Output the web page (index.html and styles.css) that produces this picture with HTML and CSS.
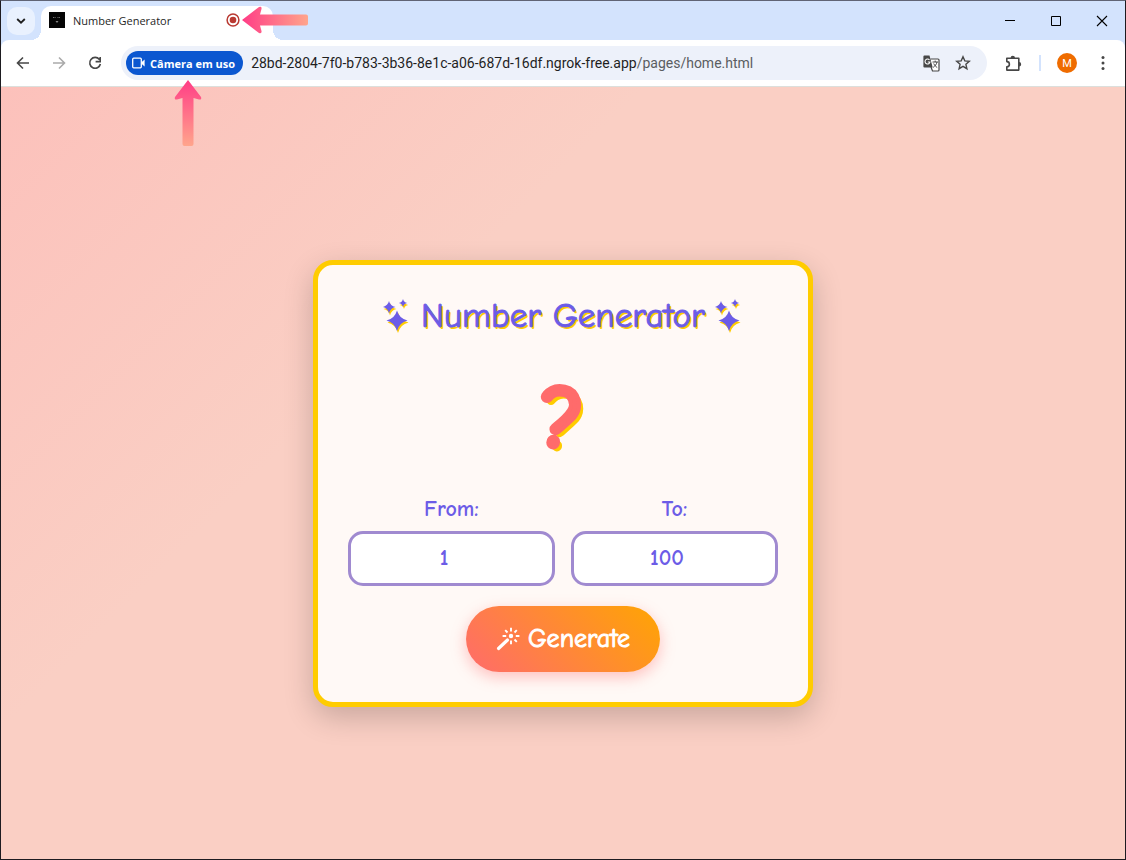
FILE: index.html
```html
<!DOCTYPE html>
<html lang="en">
<head>
<meta charset="utf-8">
<title>Number Generator</title>
<link rel="stylesheet" href="styles.css">
</head>
<body>
<div class="window">
  <header class="tabstrip">
    <button class="tab-search" aria-label="Search tabs"><svg width="10" height="6" viewBox="0 0 10 6"><path d="M1.2 1 5 4.7 8.8 1" fill="none" stroke="#1f1f1f" stroke-width="1.8"/></svg></button>
    <div class="tab">
      <svg class="favicon" width="16" height="16" viewBox="0 0 16 16"><path fill="#050505" d="M0 0h16v16H0z"/><path d="M4 5.500h3M8.500 5.500H11" stroke="#777" stroke-dasharray="1 .6"/><path d="M6.500 9h3L8 11z" fill="#888"/></svg>
      <span class="tab-title">Number Generator</span>
      <svg width="14" height="14" viewBox="0 0 14 14"><circle cx="7" cy="7" r="5.9" fill="none" stroke="#b93a32" stroke-width="1.5"/><circle cx="7" cy="7" r="3.3" fill="#b93a32"/></svg>
    </div>
    <div class="window-controls">
      <button aria-label="Minimize"><svg width="12" height="12" viewBox="0 0 12 12"><path d="M1 5.5h10" stroke="#000"/></svg></button>
      <button aria-label="Maximize"><svg width="12" height="12" viewBox="0 0 12 12"><path d="M1.5 1.5h9v9h-9z" fill="none" stroke="#000"/></svg></button>
      <button aria-label="Close"><svg width="12" height="12" viewBox="0 0 12 12"><path d="m1 1 10 10M11 1 1 11" stroke="#000" stroke-width="1.1"/></svg></button>
    </div>
  </header>

  <nav class="toolbar">
    <div class="nav-buttons">
      <button aria-label="Back"><svg width="14" height="14" viewBox="0 0 14 14"><path d="M13 7H2M7 1.5 1.5 7 7 12.5" fill="none" stroke="#474747" stroke-width="1.6"/></svg></button>
      <button aria-label="Forward"><svg width="14" height="14" viewBox="0 0 14 14"><path d="M1 7h11M7 1.5 12.5 7 7 12.5" fill="none" stroke="#aaa" stroke-width="1.6"/></svg></button>
      <button aria-label="Reload"><svg width="14" height="14" viewBox="0 0 14 14"><path d="M11.4 3.5A5.4 5.4 0 1 0 12.4 8M12.2 1v4.6H7.6" fill="none" stroke="#474747" stroke-width="1.6"/></svg></button>
    </div>
    <div class="omnibox">
      <button class="camera-chip"><svg width="13" height="12" viewBox="0 0 13 12"><rect x=".7" y="1.2" width="8.6" height="9.6" rx="1" fill="none" stroke="#fff" stroke-width="1.3"/><path d="M9.5 5.2 12.6 2.6v6.8L9.5 6.8z" fill="#fff"/></svg>Câmera em uso</button>
      <div class="url">28bd-2804-7f0-b783-3b36-8e1c-a06-687d-16df.ngrok-free.app<span class="url-path">/pages/home.html</span></div>
      <button class="omni-icon" aria-label="Translate"><svg width="17" height="17" viewBox="0 0 17 17"><path d="M7.5 4H15a1 1 0 0 1 1 1v10a1 1 0 0 1-1 1H9.5L8 12" fill="#fff" stroke="#474747" stroke-width="1.2"/><path d="M1.4.5h5.1l3.2 12H1.4a1 1 0 0 1-1-1v-10a1 1 0 0 1 1-1z" fill="#474747"/><path d="M6.5 5A2.5 2.5 0 1 0 7 7H4.8" fill="none" stroke="#fff" stroke-width="1.1"/><path d="M9.5 7H15M12.2 5.6V7M14 7c-.5 2.5-2 4-3.8 5.4M10.7 8.5c1 2 2 3 3.5 4" fill="none" stroke="#474747"/></svg></button>
      <button class="omni-icon" aria-label="Bookmark"><svg width="16" height="16" viewBox="0 0 16 16"><path d="m8 1.8 1.8 4.1 4.5.4-3.4 3 1 4.4L8 11.4l-3.9 2.3 1-4.4-3.4-3 4.5-.4z" fill="none" stroke="#474747" stroke-width="1.4"/></svg></button>
    </div>
    <button class="tool-icon" aria-label="Extensions"><svg width="17" height="17" viewBox="0 0 17 17"><path d="M1.8 3.2h12v11.900h-12v-3.300a2.300 2.300 0 0 0 0-5.200z" fill="none" stroke="#474747" stroke-width="1.6" stroke-linejoin="round"/><path d="M5.600 3a2.200 2.200 0 0 1 4.400 0zM14 7a2.200 2.200 0 0 1 0 4.400z" fill="#474747"/></svg></button>
    <span class="divider"></span>
    <button class="avatar" aria-label="Profile">M</button>
    <button class="tool-icon menu" aria-label="Menu"><svg width="4" height="16" viewBox="0 0 4 16"><g fill="#474747"><circle cx="2" cy="2.5" r="1.5"/><circle cx="2" cy="8" r="1.5"/><circle cx="2" cy="13.5" r="1.5"/></g></svg></button>
  </nav>

  <main class="page">
    <section class="card">
      <h1 class="title">
        <svg width="28" height="34" viewBox="0 0 28 34"><use href="#sparkles" x="1" y="2" fill="#ffcc00"/><g id="sparkles"><path d="M14 11.500q2.200 8 10.500 10-8.300 2-10.500 10.500-2.200-8.500-10.500-10.500 8.300-2 10.500-10zM6 2q1.200 5 6.500 6-5.300 1-6.500 6.500Q4.800 9-.5 8 4.800 7 6 2zM20 0q.8 3.300 4.200 4-3.400.7-4.200 4-.8-3.300-4.200-4 3.400-.7 4.200-4z"/></g></svg>
        <span>Number Generator</span>
        <svg width="28" height="34" viewBox="0 0 28 34"><use href="#sparkles" x="1" y="2" fill="#ffcc00"/><use href="#sparkles"/></svg>
      </h1>
      <output class="result">?</output>
      <form class="form">
        <div class="range">
          <div class="field"><label for="from">From:</label><input id="from" type="number" value="1"></div>
          <div class="field"><label for="to">To:</label><input id="to" type="number" value="100"></div>
        </div>
        <button class="generate" type="button"><svg width="24" height="24" viewBox="0 0 24 24"><path d="M2.500 21.500 11.500 13" stroke="#fff" stroke-width="3.200" stroke-linecap="round"/><circle cx="15" cy="9" r="2.200" fill="#fff"/><path d="M15 .8v3.700M15 13.500v3.700M6.600 9h3.600M19.800 9h3.600M9.200 3.200l2.300 2.300M20.800 3.200l-2.300 2.300M18.500 12.500l2.300 2.300" stroke="#fff" stroke-width="1.900"/></svg>Generate</button>
      </form>
    </section>
  </main>

  <svg class="arrow arrow-tab" width="66" height="28" viewBox="0 0 66 28"><defs><linearGradient id="ga"><stop stop-color="#ff3d86"/><stop offset="1" stop-color="#ffa58c"/></linearGradient></defs><path d="M0 14 17 1q3-1 2.500 2L18 8.500h46q2 0 2 2v7q0 2-2 2H18l1.500 5.500q.5 3-2.500 2z" fill="url(#ga)"/></svg>
  <svg class="arrow arrow-chip" width="28" height="66" viewBox="0 0 28 66"><defs><linearGradient id="gb" x2="0" y2="1"><stop stop-color="#ff3d86"/><stop offset="1" stop-color="#ffa58c"/></linearGradient></defs><path d="M14 0 27 17q1 3-2 2.500L19.500 18v46q0 2-2 2h-7q-2 0-2-2V18L3 19.500Q0 20 1 17z" fill="url(#gb)"/></svg>
</div>
</body>
</html>
```
FILE: styles.css
```css
* { box-sizing: border-box; }

body {
  margin: 0;
  font-family: "Segoe UI", "Open Sans", sans-serif;
}

button {
  padding: 0;
  border: 0;
  background: none;
  font-family: inherit;
}

svg { display: block; flex: none; }

.window {
  position: relative;
  display: flex;
  flex-direction: column;
  min-height: 100vh;
  border: 1px solid #1d1b20;
  border-top-color: #606475;
  background: #d3e3fd;
}

.tabstrip {
  display: flex;
  align-items: flex-end;
  height: 39px;
  padding-left: 6px;
}

.tab-search {
  display: grid;
  place-items: center;
  align-self: center;
  width: 28px;
  height: 28px;
  margin-right: 6px;
  border-radius: 10px;
  background: #e9f1fe;
}

.tab {
  position: relative;
  display: flex;
  align-items: center;
  gap: 8px;
  width: 232px;
  height: 34px;
  padding: 0 33px 6px 8px;
  border-radius: 10px 10px 0 0;
  background: #fff;
}

.tab::before,
.tab::after {
  content: "";
  position: absolute;
  bottom: 0;
  width: 10px;
  height: 10px;
}

.tab::before {
  right: 100%;
  background: radial-gradient(circle at 0 0, transparent 10px, #fff 10px);
}

.tab::after {
  left: 100%;
  background: radial-gradient(circle at 100% 0, transparent 10px, #fff 10px);
}

.tab-title {
  flex: 1;
  color: #1f1f1f;
  font-size: 11px;
}

.window-controls {
  display: flex;
  align-self: stretch;
  margin-left: auto;
}

.window-controls button {
  display: grid;
  place-items: center;
  width: 46px;
}

.toolbar {
  display: flex;
  align-items: center;
  height: 47px;
  padding: 0 8px;
  border-bottom: 1px solid #dcdfdc;
  border-radius: 8px 8px 0 0;
  background: #fff;
}

.nav-buttons { display: flex; gap: 8px; }

.nav-buttons button {
  display: grid;
  place-items: center;
  width: 28px;
  height: 28px;
}

.omnibox {
  display: flex;
  align-items: center;
  flex: 1;
  height: 34px;
  margin: 0 12px;
  padding: 0 8px 0 5px;
  border-radius: 17px;
  background: #edf1fa;
}

.camera-chip {
  display: flex;
  align-items: center;
  gap: 5px;
  height: 24px;
  padding: 0 8px 0 6px;
  border-radius: 12px;
  background: #0b57d0;
  color: #fff;
  font-size: 11px;
  font-weight: 700;
  white-space: nowrap;
}

.url {
  flex: 1;
  padding-left: 8px;
  color: #1f1f1f;
  font-family: Roboto, sans-serif;
  font-size: 14px;
  white-space: nowrap;
}

.url-path { color: #5a5d61; }

.omni-icon,
.tool-icon {
  display: grid;
  place-items: center;
  width: 32px;
  height: 28px;
}

.tool-icon { width: 28px; }

.divider {
  width: 2px;
  height: 16px;
  margin: 0 16px 0 12px;
  background: #d3e3fd;
}

.avatar {
  width: 20px;
  height: 20px;
  margin-right: 12px;
  border-radius: 50%;
  background: #ef6c00;
  color: #fff;
  font-family: Roboto, sans-serif;
  font-size: 11px;
}

.page {
  display: grid;
  flex: 1;
  place-items: center;
  padding: 20px 0 0;
  background: linear-gradient(135deg, #fcc1bb 0%, #facfc4 34%);
  font-family: "Comic Sans MS", "Comic Neue", "Open Sans", sans-serif;
}

.card {
  width: 500px;
  max-width: 100%;
  padding: 30px;
  border: 5px solid #ffcc00;
  border-radius: 20px;
  background: #fff9f6;
  box-shadow: 0 10px 30px rgba(0, 0, 0, 0.2);
  text-align: center;
}

.title {
  display: flex;
  align-items: center;
  justify-content: center;
  gap: 10px;
  margin: 0;
  color: #6c5ce7;
  fill: #6c5ce7;
  font-size: 35px;
  font-weight: 400;
  line-height: 42px;
  text-shadow: 2px 2px 0 #ffcc00;
  white-space: nowrap;
}

.title span { -webkit-text-stroke: 1px #6c5ce7; }

.result {
  display: block;
  margin: 24px 0 18px;
  color: #ff6b6b;
  font-size: 88px;
  font-weight: 700;
  line-height: 116px;
  text-shadow: 4px 4px 0 #ffcc00;
  -webkit-text-stroke: 4px #ff6b6b;
}

.range { display: flex; gap: 16px; }

.field {
  flex: 1;
  min-width: 0;
  color: #6c5ce7;
  font-size: 22px;
  font-weight: 700;
}

.field label {
  display: block;
  margin-bottom: 8px;
  line-height: 28px;
}

.field input {
  display: block;
  width: 100%;
  height: 55px;
  padding: 12px;
  border: 3px solid #a08ad0;
  border-radius: 15px;
  background: #fff;
  color: inherit;
  font: inherit;
  text-align: center;
}

.form { display: flex; flex-direction: column; }

.generate {
  display: flex;
  align-items: center;
  align-self: center;
  gap: 8px;
  height: 66px;
  margin-top: 20px;
  padding: 0 30px;
  border-radius: 33px;
  background: linear-gradient(45deg, #ff6b6b, #ffa502);
  box-shadow: 0 5px 15px rgba(255, 107, 107, 0.4);
  color: #fff;
  font-size: 26px;
  -webkit-text-stroke: 1px #fff;
}

.arrow { position: absolute; }
.arrow-tab { left: 241px; top: 5px; }
.arrow-chip { left: 173px; top: 79px; }
```
